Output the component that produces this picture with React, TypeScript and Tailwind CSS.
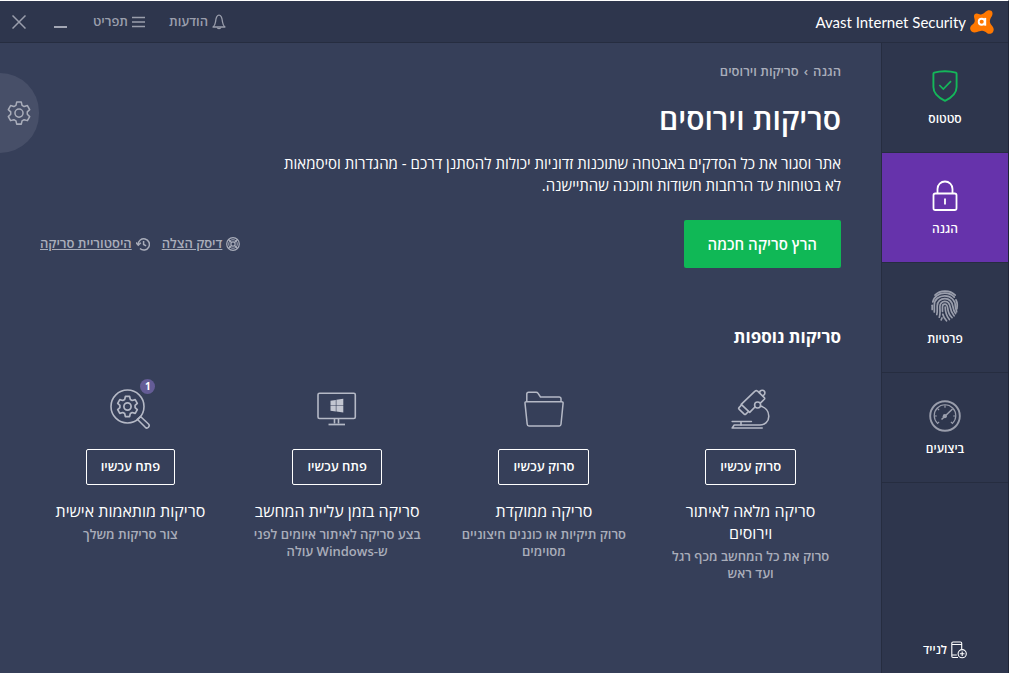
import { ReactNode } from "react";

function AvastLogo() {
  return (
    <svg width="24" height="24" viewBox="0 0 24 24" aria-hidden="true">
      <path
        d="M15.500 1.800C17 .3 19.500 -.5 21.200 .8c1.700 1.300 1.600 3.800 .6 5.400-1.300 2-2.100 3.700-1.900 5.600.2 1.900 1.400 3.200 2.700 4.700 1.400 1.700 1.500 4.200 .1 5.900-1.400 1.600-4.100 1.900-5.800 .5-1.700-1.300-3.100-2.400-5.200-2.200-1.500.1-2.900.7-4.600 1.300-1.900.7-4 .7-5.500-.6-1.700-1.400-2-4-.5-5.700 1.300-1.500 3-2 3.500-4 .5-1.900-.5-3.500-.6-5.300C3.900 4.400 5.400 3.300 7 3.600c1.500.3 2.500 1.100 4.100.8C12.800 4.100 14.200 3.100 15.500 1.800z"
        fill="#ff7800"
      />
      <circle cx="11.700" cy="11.800" r="3" fill="none" stroke="#fff" strokeWidth="1.900" />
      <path d="M15.200 7.900v7.800" stroke="#fff" strokeWidth="2" />
    </svg>
  );
}

function BellIcon() {
  return (
    <svg width="14" height="16" viewBox="0 0 14 16" fill="none" stroke="currentColor" strokeWidth="1.300" aria-hidden="true">
      <path d="M1 13c1.800-1.200 2.200-3 2.500-5C3.800 5.500 4 1.200 7 1.200S10.200 5.500 10.500 8c.3 2 .7 3.800 2.500 5z" strokeLinejoin="round" />
      <path d="M5.200 13.500c.3 1.600 3.300 1.600 3.600 0" />
    </svg>
  );
}

function MenuIcon() {
  return (
    <svg width="13" height="12" viewBox="0 0 13 12" stroke="currentColor" strokeWidth="1.700" aria-hidden="true">
      <path d="M0 1.500h13M0 6h13M0 10.500h13" />
    </svg>
  );
}

const gearPath =
  "M9.900 1h4.200l.7 3 1.900 1.100 3-.9 2.100 3.700-2.200 2.100v2.200l2.200 2.100-2.100 3.700-3-.9-1.900 1.100-.7 3H9.900l-.7-3-1.900-1.100-3 .9-2.100-3.700 2.200-2.100V10L2.200 7.900l2.100-3.700 3 .9L9.200 4z";

function GearIcon() {
  return (
    <svg width="24" height="24" viewBox="1 0 22 22" fill="none" stroke="currentColor" strokeWidth="1.400" strokeLinejoin="round" aria-hidden="true">
      <path d={gearPath} />
      <circle cx="12" cy="11.100" r="3.700" />
    </svg>
  );
}

function ShieldIcon() {
  return (
    <svg width="32" height="32" viewBox="0 0 32 32" fill="none" stroke="#14b75a" strokeWidth="1.900" aria-hidden="true">
      <path d="M16 1.200c4 0 8 .6 10.800 1.500.5.200.8.500.8 1V17c0 7-6.500 11.400-11.600 13.800C10.900 28.400 4.400 24 4.400 17V3.700c0-.5.300-.8.800-1C8 1.800 12 1.200 16 1.200z" strokeLinejoin="round" />
      <path d="M10.300 15l4 4 7.700-7.800" strokeWidth="1.700" />
    </svg>
  );
}

function LockIcon() {
  return (
    <svg width="32" height="32" viewBox="0 0 32 32" fill="none" stroke="#fff" strokeWidth="1.800" aria-hidden="true">
      <rect x="4.500" y="13.500" width="23" height="16.500" rx="1.800" />
      <path d="M8.500 13.500V9a7.500 7.500 0 0 1 15 0v4.500" />
      <path d="M16 18.500v6" />
    </svg>
  );
}

function FingerprintIcon() {
  return (
    <svg width="32" height="32" viewBox="0 0 32 32" fill="none" stroke="#9a9eac" strokeWidth="1.700" strokeLinecap="round" aria-hidden="true">
      <path d="M6 5.200C11 -.2 21 -.2 26.200 5.200" />
      <path d="M3.800 12C5 6.200 10.200 3.200 15.800 3.200c3.900 0 7.200 1.500 9.500 4" />
      <path d="M27 9.800c1.400 2.700 1.500 6 .9 9" />
      <path d="M3.200 19.500V15.300" />
      <path d="M5.300 22V15C5.300 9.200 10.200 5.900 15.800 5.900c6.500 0 10.600 4.700 10.600 10.500 0 1.600 1 3.600 1.200 5.400" />
      <path d="M7.800 24.500c.7-2 .4-5.500.4-8.500 0-4.400 3.400-7.400 7.600-7.400 5.100 0 7.400 3.400 8.200 8.400.4 2.800 1.400 4.800 2.600 6.600" />
      <path d="M10.300 27.200c1.200-3 .6-7 .6-10.800 0-2.700 2.100-5 4.900-5 4 0 5 2.800 5.500 6 .4 3.200 1.800 6 3.800 8.400" />
      <path d="M13.500 21.500c-.1-1.800 0-3.800 0-5 0-1.300 1-2.400 2.300-2.400 2.200 0 2.600 1.800 2.900 4 .4 3.600 1.900 7.300 4.300 9.600" />
      <path d="M16.200 17.200c.1 4.600 1.200 8.600 4.200 12.300" />
      <path d="M13.800 24.200c.6 2.400 1.900 4.600 3.700 6.600M13 28l-.8 1.800" />
    </svg>
  );
}

function GaugeIcon() {
  return (
    <svg width="32" height="32" viewBox="0 0 32 32" fill="none" stroke="#9a9eac" strokeWidth="1.200" aria-hidden="true">
      <circle cx="16" cy="16" r="14.800" strokeWidth="1.900" />
      <path d="M8.600 23.400a10.800 10.800 0 1 1 14.800 0" />
      <path d="M16 5.200v2.600M5.200 16h2.600M26.800 16h-2.600M8.400 8.400l1.700 1.700M8.200 23.800l1.900-1.900M23.800 23.800l-1.900-1.900" />
      <path d="M12.500 19.500L23.500 9" strokeWidth="1.600" />
      <circle cx="15.800" cy="16.200" r="2.100" fill="#9a9eac" stroke="none" />
    </svg>
  );
}

function MobileIcon() {
  return (
    <svg width="16" height="18" viewBox="0 0 16 18" fill="none" stroke="#fff" strokeWidth="1.100" aria-hidden="true">
      <path d="M7 16.500H2A1.200 1.200 0 0 1 .8 15.300V2.200A1.200 1.200 0 0 1 2 1h7.500a1.200 1.200 0 0 1 1.200 1.200V8M.8 3.500h9.900M.8 14h5" />
      <circle cx="11.200" cy="12.700" r="4.100" />
      <path d="M11.200 10.400V15M8.900 12.700h4.600" />
    </svg>
  );
}

function RescueDiskIcon() {
  return (
    <svg width="14" height="14" viewBox="0 0 14 14" fill="none" stroke="currentColor" strokeWidth="1.200" aria-hidden="true">
      <circle cx="7" cy="7" r="6.300" />
      <circle cx="7" cy="7" r="4.300" strokeWidth=".9" />
      <circle cx="7" cy="7" r="2.100" />
      <path d="M2.600 2.600l2.900 2.900M11.400 2.600L8.500 5.500M2.600 11.400l2.900-2.900M11.400 11.400L8.500 8.500" />
    </svg>
  );
}

function HistoryIcon() {
  return (
    <svg width="14" height="14" viewBox="0 0 14 14" fill="none" stroke="currentColor" strokeWidth="1.500" aria-hidden="true">
      <path d="M2.200 7.500a5.600 5.600 0 1 1 1.800 4" />
      <path d="M0 5.500l2.300 2.700L4.800 5.800" />
      <path d="M7.600 4v3.500l2.500 1.300" />
    </svg>
  );
}

function MicroscopeIcon() {
  return (
    <svg width="42" height="42" viewBox="0 0 42 42" fill="none" stroke="#b5b9c6" strokeWidth="1.600" strokeLinejoin="round" strokeLinecap="round" aria-hidden="true">
      <path d="M24.700 19.200l-5 5.200-8.500-8.100L25 3.200c.8-.8 1.800-.8 2.600 0l6.700 6.400c.6.600.5 1.100 0 1.700l-3.700 3.600" />
      <path d="M11.500 17l-2.500 2.600c-.5.500-.5 1 0 1.500l5.200 5c.6.600 1.100.5 1.600 0l2.700-2.600" />
      <path d="M29.500 4.800c.2-1.700 1.300-2.600 2.700-2.600 1.500 0 2.700 1.200 2.700 2.700 0 1.300-.8 2.400-2 2.700" />
      <circle cx="27.600" cy="17" r="3" />
      <path d="M30.500 18c5 1.300 8.300 5.300 8.300 10.200 0 5.400-4 8.800-9 8.800H4.200l-2 3h30" />
      <path d="M2.200 33.500h19.200M11 33.500V37" />
    </svg>
  );
}

function FolderIcon() {
  return (
    <svg width="42" height="42" viewBox="0 0 42 42" fill="none" stroke="#b5b9c6" strokeWidth="1.500" strokeLinejoin="round" aria-hidden="true">
      <path d="M3.800 13.500V6A1.800 1.800 0 0 1 5.600 4.200h7.600c.8 0 1.300.4 1.700 1L17.500 9h18.700A1.800 1.800 0 0 1 38 10.800v2.700" />
      <path d="M3.400 13.700h35.200c1 0 1.600.6 1.500 1.500L38 36.300c-.1 1.100-.8 1.700-1.800 1.700H6c-1 0-1.700-.6-1.800-1.700L2 15.200c-.1-.9.400-1.500 1.400-1.500z" />
    </svg>
  );
}

function BootScanIcon() {
  return (
    <svg width="42" height="42" viewBox="0 0 42 42" fill="none" stroke="#b5b9c6" strokeWidth="1.600" aria-hidden="true">
      <rect x="2" y="5.200" width="37.300" height="25.300" rx="1.500" />
      <path d="M18.500 31v4.500M22.500 31v4.500" />
      <path d="M12.500 36.500H29" strokeWidth="1.700" />
      <path
        d="M14.500 12.700l5.300-.8v5.500h-5.300zM20.400 11.800l6.900-1v6.600h-6.900zM14.500 18h5.300v5.500l-5.300-.8zM20.400 18h6.900v6.600l-6.900-1z"
        fill="#c3c6d1"
        stroke="none"
      />
    </svg>
  );
}

function CustomScanIcon() {
  return (
    <svg width="42" height="42" viewBox="0 0 42 42" fill="none" stroke="#b5b9c6" strokeWidth="1.600" strokeLinejoin="round" aria-hidden="true">
      <circle cx="18.500" cy="18.500" r="16.500" />
      <path d="M31.500 28.500l8 7.500c2 2.200-1 5.300-3.200 3.300l-8-8z" />
      <g transform="translate(6.500 7.400)" strokeWidth="1.700">
        <path d={gearPath} />
        <circle cx="12" cy="11.100" r="3.600" />
      </g>
    </svg>
  );
}

interface NavItem {
  label: string;
  icon: ReactNode;
  active?: boolean;
}

const navItems: NavItem[] = [
  { label: "סטטוס", icon: <ShieldIcon /> },
  { label: "הגנה", icon: <LockIcon />, active: true },
  { label: "פרטיות", icon: <FingerprintIcon /> },
  { label: "ביצועים", icon: <GaugeIcon /> },
];

interface Scan {
  title: string;
  description: string;
  action: string;
  icon: ReactNode;
  badge?: number;
}

const scans: Scan[] = [
  {
    title: "סריקה מלאה לאיתור וירוסים",
    description: "סרוק את כל המחשב מכף רגל ועד ראש",
    action: "סרוק עכשיו",
    icon: <MicroscopeIcon />,
  },
  {
    title: "סריקה ממוקדת",
    description: "סרוק תיקיות או כוננים חיצוניים מסוימים",
    action: "סרוק עכשיו",
    icon: <FolderIcon />,
  },
  {
    title: "סריקה בזמן עליית המחשב",
    description: "בצע סריקה לאיתור איומים לפני ש-Windows עולה",
    action: "פתח עכשיו",
    icon: <BootScanIcon />,
  },
  {
    title: "סריקות מותאמות אישית",
    description: "צור סריקות משלך",
    action: "פתח עכשיו",
    icon: <CustomScanIcon />,
    badge: 1,
  },
];

function Header() {
  return (
    <header className="flex h-[42px] items-center justify-between border-b border-[#262d40] bg-[#2e364d] pr-[14px] pl-3">
      <div className="flex items-center gap-1">
        <AvastLogo />
        <span dir="ltr" className="font-['Lato',sans-serif] text-[15px] leading-5 text-white">
          Avast Internet Security
        </span>
      </div>
      <div className="flex items-center text-[13px] font-semibold text-[#9a9eac]">
        <button type="button" className="flex items-center gap-1">
          <BellIcon />
          הודעות
        </button>
        <button type="button" className="mr-6 flex items-center gap-1">
          <MenuIcon />
          תפריט
        </button>
        <button type="button" aria-label="מזער" className="mr-[26px] flex h-4 w-[13px] items-end pb-[2px]">
          <span className="h-[2px] w-full bg-[#a3a7b4]" />
        </button>
        <button type="button" aria-label="סגור" className="mr-7">
          <svg width="14" height="14" viewBox="0 0 14 14" stroke="currentColor" strokeWidth="1.500" className="block">
            <path d="M.5 .5l13 13M13.500 .5l-13 13" />
          </svg>
        </button>
      </div>
    </header>
  );
}

function Sidebar() {
  return (
    <nav className="flex w-[127px] shrink-0 flex-col border-l border-[#262d40] bg-[#2e364d] text-white">
      {navItems.map((item) => (
        <a
          key={item.label}
          href="#"
          className={
            item.active
              ? "flex h-[110px] flex-col items-center gap-[9px] border-b border-[#262d40] bg-[#6633ab] pt-[27px]"
              : "flex h-[110px] flex-col items-center gap-[9px] border-b border-[#262d40] pt-[27px]"
          }
        >
          {item.icon}
          <span className="text-xs font-semibold">{item.label}</span>
        </a>
      ))}
      <a href="#" className="mt-auto mb-[14px] flex items-center justify-center gap-1 text-xs font-semibold">
        <MobileIcon />
        לנייד
      </a>
    </nav>
  );
}

function ScanCard({ scan }: { scan: Scan }) {
  return (
    <article className="flex flex-col items-center px-4 text-center">
      <div className="relative">
        {scan.icon}
        {scan.badge && (
          <span className="absolute -top-[9px] -right-[4px] flex h-[15px] w-[15px] items-center justify-center rounded-full bg-[#645c96] text-[10px] font-bold text-white">
            {scan.badge}
          </span>
        )}
      </div>
      <button type="button" className="mt-[19px] h-9 rounded-[2px] border border-white px-[14px] text-[13px] font-semibold text-white">
        {scan.action}
      </button>
      <h3 className="mt-[15px] text-base leading-[22px] text-white">{scan.title}</h3>
      <p className="mt-1 text-[13px] leading-[17px] font-semibold text-[#a9adba]">{scan.description}</p>
    </article>
  );
}

export default function App() {
  return (
    <div
      dir="rtl"
      className="flex min-h-screen flex-col border-t border-r border-t-white border-r-[#1f2536] bg-[#363f59] font-['Open_Sans','Liberation_Sans',sans-serif]"
    >
      <Header />
      <div className="flex flex-1">
        <Sidebar />
        <main className="relative flex-1 px-[27px] pt-[17px] pb-8">
          <button
            type="button"
            aria-label="הגדרות"
            className="absolute top-[30px] left-0 flex h-20 w-[39px] items-center justify-center rounded-r-full bg-[#474f68] pr-[2px] text-[#a9adba]"
          >
            <GearIcon />
          </button>

          <div className="px-[13px]">
            <div className="flex gap-[5px] text-[13px] leading-[22px] font-semibold text-[#a9adba]">
              <a href="#">הגנה</a>
              <span>›</span>
              <span>סריקות וירוסים</span>
            </div>
            <h1 className="mt-[19px] text-[30px] leading-9 font-semibold text-white">סריקות וירוסים</h1>
            <p className="mt-[15px] max-w-[570px] text-[15px] leading-[22px] text-white">
              אתר וסגור את כל הסדקים באבטחה שתוכנות זדוניות יכולות להסתנן דרכם - מהגדרות וסיסמאות לא
              בטוחות עד הרחבות חשודות ותוכנה שהתיישנה.
            </p>
            <div className="mt-6 flex items-center justify-between">
              <button type="button" className="h-12 rounded-[2px] bg-[#10b856] px-6 text-[15px] font-semibold text-white">
                הרץ סריקה חכמה
              </button>
              <div className="flex gap-3 text-[13px] font-semibold text-[#a9adba]">
                <a href="#" className="flex items-center gap-1">
                  <RescueDiskIcon />
                  <span className="underline">דיסק הצלה</span>
                </a>
                <a href="#" className="flex items-center gap-1">
                  <HistoryIcon />
                  <span className="underline">היסטוריית סריקה</span>
                </a>
              </div>
            </div>
            <h2 className="mt-[57px] text-[17px] leading-6 font-bold text-white">סריקות נוספות</h2>
          </div>

          <section className="mt-[39px] grid grid-cols-4">
            {scans.map((scan) => (
              <ScanCard key={scan.title} scan={scan} />
            ))}
          </section>
        </main>
      </div>
    </div>
  );
}
